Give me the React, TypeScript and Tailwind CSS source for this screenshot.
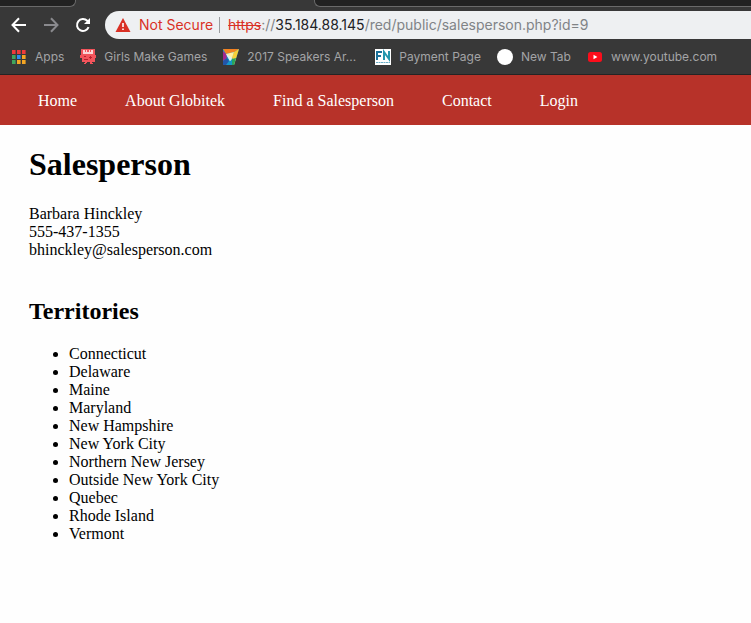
import type { ReactNode } from "react";

const territories = [
  "Connecticut",
  "Delaware",
  "Maine",
  "Maryland",
  "New Hampshire",
  "New York City",
  "Northern New Jersey",
  "Outside New York City",
  "Quebec",
  "Rhode Island",
  "Vermont",
];

const navLinks = ["Home", "About Globitek", "Find a Salesperson", "Contact", "Login"];

function AppsIcon() {
  const colors = [
    ["#f03a3a", "#f03a3a", "#f03a3a"],
    ["#3fa55d", "#2f8cf0", "#f5a623"],
    ["#3fa55d", "#f5a623", "#f5a623"],
  ];
  return (
    <svg className="size-4 shrink-0" viewBox="0 0 16 16" aria-hidden="true">
      {colors.map((row, y) =>
        row.map((fill, x) => (
          <rect key={`${x}-${y}`} x={1 + x * 5} y={1 + y * 5} width="3.6" height="4" fill={fill} />
        )),
      )}
    </svg>
  );
}

function MonsterIcon() {
  return (
    <svg className="size-4 shrink-0" viewBox="0 0 16 16" aria-hidden="true">
      <path d="M1 0h14v6h1v3h-1v4h-3v1h1v1h-3v-2H7v1H6v1H4v-1h1v-1H2V9H0V6h1z" fill="#f2545b" />
      <path d="M3 1h2v2h1V1h1v2h2V1h1v2h1V1h2v4H3z" fill="#fbd5d5" />
      <path d="M4 7h2v1H4zM10 7h1v1h1v1h-1v1h-1V9H9V8h1zM4 10h4v1H4z" fill="#b8202c" />
    </svg>
  );
}

function PrismIcon() {
  return (
    <svg className="size-4 shrink-0" viewBox="0 0 16 16" aria-hidden="true">
      <path d="M0 0h16L11 16H0z" fill="#1597c9" />
      <path d="M0 0h16l-5 3-8 2z" fill="#f58220" />
      <path d="M16 0l-5 16-2-8 2-5z" fill="#f7d038" />
      <path d="M3 5l8-2-2 6-2 3z" fill="#fff0a0" />
      <path d="M0 2l3 3 1 4-4 3z" fill="#a3278f" />
      <path d="M3 5l4 7 2-2-1-2z" fill="#d8f1f5" />
      <path d="M0 12l4-3 2 3-3 4H0z" fill="#2355a8" />
      <path d="M9 10l4-1-2 7H9z" fill="#28a55f" />
    </svg>
  );
}

function FnIcon() {
  return (
    <svg className="size-4 shrink-0" viewBox="0 0 16 16" aria-hidden="true">
      <path d="M0 0h16v16H0z" fill="#fff" />
      <path d="M2 11V3h5M2 7h4" stroke="#1a7099" strokeWidth="2" fill="none" />
      <path d="M9 11V3l5 7V2" stroke="#2496ad" strokeWidth="2" fill="none" />
      <path d="M1 13.5h14" stroke="#6aaec8" strokeDasharray="2 .5" />
    </svg>
  );
}

function GlobeIcon() {
  return (
    <svg className="size-4 shrink-0" viewBox="0 0 16 16" aria-hidden="true">
      <circle cx="8" cy="8" r="8" fill="#fff" />
    </svg>
  );
}

function YouTubeIcon() {
  return (
    <svg className="size-4 shrink-0" viewBox="0 0 16 16" aria-hidden="true">
      <rect x="1" y="3" width="14" height="10" rx="2.5" fill="#fc0d1b" />
      <path d="M6.5 5.8v4.4L10.4 8z" fill="#fff" />
    </svg>
  );
}

const bookmarks: { label: string; icon: ReactNode; width?: string }[] = [
  { label: "Apps", icon: <AppsIcon /> },
  { label: "Girls Make Games", icon: <MonsterIcon /> },
  { label: "2017 Speakers Ar...", icon: <PrismIcon />, width: "w-[136px]" },
  { label: "Payment Page", icon: <FnIcon /> },
  { label: "New Tab", icon: <GlobeIcon /> },
  { label: "www.youtube.com", icon: <YouTubeIcon /> },
];

function TabStrip() {
  return (
    <div className="flex h-[7px] justify-between">
      <div className="w-[76px] rounded-br-md border-r border-b border-[#6a6a6a] bg-[#222222]" />
      <div className="ml-[238px] flex-1 rounded-bl-md border-b border-l border-[#6a6a6a] bg-[#222222]" />
    </div>
  );
}

function Toolbar() {
  return (
    <div className="flex items-center pt-1 pl-[11px]">
      <div className="flex gap-4">
        <button type="button" aria-label="Back" className="text-white">
          <svg className="size-4" viewBox="0 0 16 16" fill="none" stroke="currentColor" strokeWidth="2">
            <path d="M15 8H2M8 1.2L1.5 8 8 14.8" />
          </svg>
        </button>
        <button type="button" aria-label="Forward" className="text-[#8a8a8e]">
          <svg className="size-4" viewBox="0 0 16 16" fill="none" stroke="currentColor" strokeWidth="2">
            <path d="M1 8h13M8 1.2L14.5 8 8 14.8" />
          </svg>
        </button>
        <button type="button" aria-label="Reload" className="text-white">
          <svg className="size-4" viewBox="0 0 16 16" fill="none" stroke="currentColor" strokeWidth="2">
            <path d="M13.6 10.2A6 6 0 1 1 12.3 3.8L14 5.5" />
            <path d="M15 1v6H9z" fill="currentColor" stroke="none" />
          </svg>
        </button>
      </div>
      <div className="ml-[14px] flex h-7 min-w-0 flex-1 items-center rounded-l-full bg-[#eef0f2] pl-[10px] text-sm">
        <svg className="h-3.5 w-4 shrink-0" viewBox="0 0 16 14" aria-hidden="true">
          <path d="M8 0l7.5 14H.5z" fill="#d93025" />
          <path d="M7.2 5h1.6v4H7.2zM7.2 10.4h1.6V12H7.2z" fill="#fff" />
        </svg>
        <span className="ml-2 whitespace-nowrap text-[#d93025]">Not Secure</span>
        <span className="mr-2 ml-1.5 h-4 w-px shrink-0 bg-[#9a9c9f]" />
        <label htmlFor="address" className="whitespace-nowrap text-[#808386]">
          <span className="text-[#d93025] line-through">https</span>://
          <span className="text-[#202124]">35.184.88.145</span>
        </label>
        <input
          id="address"
          type="text"
          defaultValue="/red/public/salesperson.php?id=9"
          className="min-w-0 flex-1 bg-transparent text-[#808386] outline-none"
        />
      </div>
    </div>
  );
}

function BookmarksBar() {
  return (
    <div className="flex h-[35px] items-center gap-4 overflow-hidden pl-[11px] text-xs text-[#a3a4a6]">
      {bookmarks.map(({ label, icon, width }) => (
        <a
          key={label}
          href="#"
          className={`flex shrink-0 items-center gap-2 whitespace-nowrap ${width ?? ""}`}
        >
          {icon}
          {label}
        </a>
      ))}
    </div>
  );
}

export default function App() {
  return (
    <div className="min-h-screen bg-[#fefefe] font-['Liberation_Serif',serif] text-base leading-[18px] text-black">
      <header className="border-b border-[#242424] bg-[#383838] font-['Inter',sans-serif]">
        <TabStrip />
        <Toolbar />
        <BookmarksBar />
      </header>
      <nav className="flex gap-12 bg-[#b73229] pt-[17px] pb-[15px] pl-[38px] whitespace-nowrap text-white">
        {navLinks.map((link) => (
          <a key={link} href="#">
            {link}
          </a>
        ))}
      </nav>
      <main className="px-[29px] pt-[21px]">
        <h1 className="text-[32px] leading-9 font-bold">Salesperson</h1>
        <p className="mt-[23px]">
          Barbara Hinckley
          <br />
          555-437-1355
          <br />
          bhinckley@salesperson.com
        </p>
        <h2 className="mt-[38px] text-2xl leading-7 font-bold">Territories</h2>
        <ul className="mt-5 list-disc pl-10">
          {territories.map((name) => (
            <li key={name}>{name}</li>
          ))}
        </ul>
      </main>
    </div>
  );
}
